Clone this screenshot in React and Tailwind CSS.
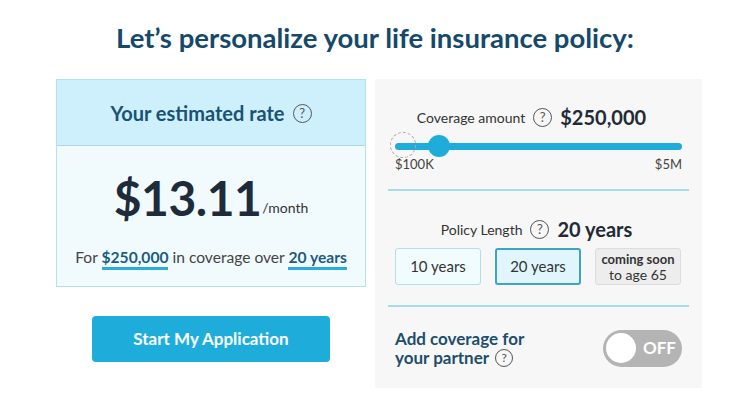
import React, { useState } from "react"

const Help = ({ className = "" }) => (
  <span
    className={`inline-flex items-center justify-center rounded-full border border-[#555] text-[#555] font-normal leading-none ${className}`}
  >
    ?
  </span>
)

const App = () => {
  const [term, setTerm] = useState("20")
  const [partner, setPartner] = useState(false)

  return (
    <div className="w-[750px] h-[410px] bg-white font-['Lato','Liberation_Sans',sans-serif] overflow-hidden">
      <h1 className="pt-[18px] text-center text-[27.5px] leading-[40px] font-bold text-[#15496b]">
        Let’s personalize your life insurance policy:
      </h1>

      <div className="flex gap-[9px] pl-[56px] mt-[21px]">
        {/* left column */}
        <div className="w-[310px] flex flex-col items-center">
          <div className="w-full border border-[#b3e2ee]">
            <div className="h-[66px] bg-[#cdf0fc] border-b border-[#a9d9e6] flex items-center justify-center gap-[8px]">
              <span className="text-[20px] font-bold text-[#1a5274]">Your estimated rate</span>
              <Help className="w-[19px] h-[19px] text-[13px] mt-[1px]" />
            </div>
            <div className="h-[140px] bg-[#f1fbfe] flex flex-col items-center">
              <div className="flex items-end mt-[26px] h-[50px]">
                <span className="text-[48px] leading-[48px] font-bold text-[#1e2b3a] tracking-[-0.5px]">$13.11</span>
                <span className="text-[14px] text-[#333] mb-[4px] ml-[1px]">/month</span>
              </div>
              <p className="mt-[24px] text-[15.6px] text-[#444] leading-[22px]">
                For{" "}
                <span className="font-bold text-[#1b5b82] border-b-[3px] border-[#2cacd9] pb-[1px]">$250,000</span>{" "}
                in coverage over{" "}
                <span className="font-bold text-[#1b5b82] border-b-[3px] border-[#2cacd9] pb-[1px]">20 years</span>
              </p>
            </div>
          </div>
          <button className="mt-[29px] w-[238px] h-[46px] rounded-[4px] bg-[#1eaddb] text-white text-[17px] font-bold">
            Start My Application
          </button>
        </div>

        {/* right panel */}
        <div className="w-[327px] h-[309px] bg-[#f7f7f7] px-[13px]">
          <div className="flex items-center justify-center gap-[8px] pt-[23px] pr-[14px]">
            <span className="text-[14px] text-[#333]">Coverage amount</span>
            <Help className="w-[19px] h-[19px] text-[13px]" />
            <span className="text-[20px] font-bold text-[#222b35]">$250,000</span>
          </div>
          <div className="relative mx-[7px] mt-[2px] h-[24px]">
            <div className="absolute left-0 right-0 top-[9px] h-[7px] rounded-full bg-[#1eaddb]" />
            <div className="absolute left-[-5px] top-[-2px] w-[26px] h-[26px] rounded-full border border-dashed border-[#b7a4a8]" />
            <div className="absolute left-[33px] top-[1px] w-[22px] h-[22px] rounded-full bg-[#1eaddb]" />
          </div>
          <div className="flex justify-between mx-[7px] text-[13px] text-[#444] leading-[16px] mt-[-2px]">
            <span>$100K</span>
            <span>$5M</span>
          </div>
          <div className="h-[2px] bg-[#a5dce8] mt-[17px]" />

          <div className="flex items-center justify-center gap-[8px] pt-[23px] pr-[4px]">
            <span className="text-[14px] text-[#333]">Policy Length</span>
            <Help className="w-[19px] h-[19px] text-[13px]" />
            <span className="text-[20px] font-bold text-[#222b35]">20 years</span>
          </div>
          <div className="flex gap-[14px] mx-[7px] mt-[4px]">
            {["10", "20"].map((t) => (
              <button
                key={t}
                onClick={() => setTerm(t)}
                className={`w-[86px] h-[37px] rounded-[3px] text-[15px] text-[#333] ${
                  term === t
                    ? "bg-[#e0f6fc] border-2 border-[#3ea3c6]"
                    : "bg-[#f0fcfe] border border-[#b2dfea]"
                }`}
              >
                {t} years
              </button>
            ))}
            <div className="w-[86px] h-[37px] rounded-[3px] bg-[#ededed] border border-[#dcdcdc] flex flex-col items-center justify-center text-[#333] leading-[15px]">
              <span className="text-[13px] font-bold">coming soon</span>
              <span className="text-[14px]">to age 65</span>
            </div>
          </div>
          <div className="h-[2px] bg-[#a5dce8] mt-[20px]" />

          <div className="flex items-center justify-between mx-[7px] mt-[22px]">
            <div className="text-[17px] font-bold text-[#1d4e6d] leading-[19px]">
              <div>Add coverage for</div>
              <div className="flex items-center gap-[6px]">
                your partner
                <Help className="w-[18px] h-[18px] text-[12px] font-normal" />
              </div>
            </div>
            <button
              onClick={() => setPartner(!partner)}
              className="w-[79px] h-[37px] rounded-full bg-[#b4b4b4] flex items-center pl-[3px]"
            >
              <span className="w-[30px] h-[30px] rounded-full bg-white" />
              <span className="ml-[7px] text-[17px] font-bold text-white">OFF</span>
            </button>
          </div>
        </div>
      </div>
    </div>
  )
}

export default App
